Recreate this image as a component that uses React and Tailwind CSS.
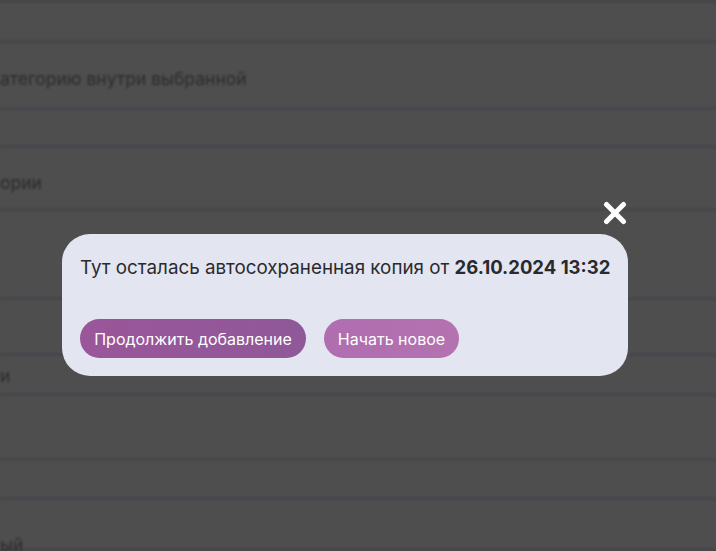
export default function App() {
  const rows = [
    { h: "h-[40px]", text: "" },
    { h: "h-[67px]", text: "атегорию внутри выбранной", pt: "pt-[8px]" },
    { h: "h-[38px]", text: "" },
    { h: "h-[63px]", text: "ории", pt: "pt-[10px]" },
    { h: "h-[89px]", text: "" },
    { h: "h-[56px]", text: "" },
    { h: "h-[40px]", text: "и", pt: "pt-[2px]" },
    { h: "h-[65px]", text: "" },
    { h: "h-[39px]", text: "" },
    { h: "h-[51px]", text: "ый", pt: "pt-[42px]" },
  ];

  return (
    <div className="relative w-[716px] h-[551px] overflow-hidden bg-[#4e4e4e] font-['Inter',sans-serif]">
      <div className="blur-[1.2px]">
        <div className="h-[3px] bg-[#444348]" />
        {rows.map((r, i) => (
          <div
            key={i}
            className={`${r.h} ${r.pt || ""} flex items-center border-b-[3px] border-[#46454a] text-[17.5px] leading-[22px] text-[#2c2c2e]`}
          >
            {r.text && <span className="whitespace-nowrap">{r.text}</span>}
          </div>
        ))}
      </div>

      <div className="absolute inset-0">
        <div className="relative ml-[62px] mt-[234px] w-[566px] h-[142px] rounded-[28px] bg-[#e3e5f0] px-[18px] pt-[20px]">
          <button className="absolute right-[1px] -top-[33px] w-[24px] h-[24px] flex items-center justify-center">
            <svg width="24" height="24" viewBox="0 0 24 24">
              <path
                d="M3.5 3.5 L20.5 20.5 M20.5 3.5 L3.5 20.5"
                stroke="#ffffff"
                strokeWidth="5"
                strokeLinecap="round"
              />
            </svg>
          </button>
          <p className="text-[18.8px] leading-[26px] text-[#2a2a2e] whitespace-nowrap">
            Тут осталась автосохраненная копия от{" "}
            <span className="font-bold text-[18.5px]">26.10.2024 13:32</span>
          </p>
          <div className="flex gap-[18px] mt-[38px]">
            <button className="w-[226px] h-[39px] rounded-full bg-gradient-to-r from-[#9a569a] to-[#8f5898] text-white text-[16px]">
              Продолжить добавление
            </button>
            <button className="w-[135px] h-[39px] rounded-full bg-gradient-to-r from-[#b06db0] to-[#b472b0] text-white text-[16px]">
              Начать новое
            </button>
          </div>
        </div>
      </div>
    </div>
  );
}
